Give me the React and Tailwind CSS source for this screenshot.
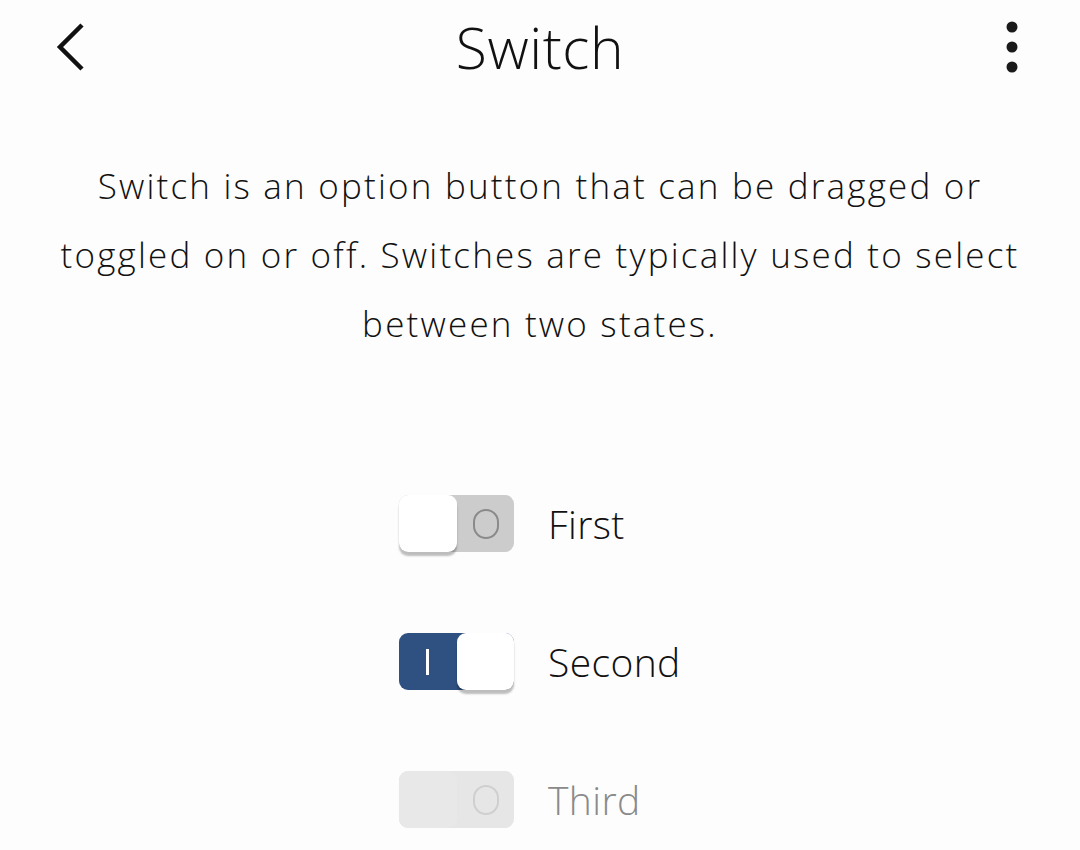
export default function App() {
  return (
    <div className="w-[1080px] h-[850px] bg-[#fdfdfd] overflow-hidden text-[#111] font-['Open_Sans',sans-serif] font-light">
      {/* Header */}
      <div className="h-[100px] grid grid-cols-[1fr_auto_1fr] items-center pl-[46px] pr-[50px]">
        <svg width="40" height="56" viewBox="0 0 40 56" className="-mt-[4px]">
          <path d="M36 5 L14 27 L36 49" fill="none" stroke="#111" strokeWidth="4.5" />
        </svg>
        <div className="text-[57px] leading-none pb-[6px] pl-[4px] tracking-[0.6px]">Switch</div>
        <svg width="12" height="56" viewBox="0 0 12 56" className="justify-self-end mr-[12px] -mt-[6px]">
          <circle cx="6" cy="8" r="5.5" fill="#1a1a1a" />
          <circle cx="6" cy="28" r="5.5" fill="#1a1a1a" />
          <circle cx="6" cy="48" r="5.5" fill="#1a1a1a" />
        </svg>
      </div>

      {/* Description */}
      <p className="mt-[51px] text-center text-[35px] leading-[69px] tracking-[2.2px]">
        Switch is an option button that can be dragged or<br />
        toggled on or off. Switches are typically used to select<br />
        between two states.
      </p>

      {/* Switches */}
      <div className="mt-[137px] ml-[399px] flex flex-col gap-[81px]">
        <Row label="First" checked={false} />
        <Row label="Second" checked />
        <Row label="Third" checked={false} disabled />
      </div>
    </div>
  );
}

function Row({ label, checked, disabled }) {
  return (
    <div className="flex items-center gap-[34px]">
      <Toggle checked={checked} disabled={disabled} />
      <span className={`text-[39px] leading-none tracking-[0.4px] ${disabled ? 'text-[#8a8a8a]' : 'text-[#111]'}`}>{label}</span>
    </div>
  );
}

function Toggle({ checked, disabled }) {
  const track = disabled ? 'bg-[#e6e6e6]' : checked ? 'bg-[#2f5182]' : 'bg-[#cccccc]';
  const thumb = disabled
    ? 'bg-[#e8e8e8]'
    : 'bg-white shadow-[0_4px_2px_rgba(0,0,0,0.25)]';
  return (
    <div className={`relative w-[115px] h-[57px] rounded-[9px] ${track} flex`}>
      {checked ? (
        <>
          <div className="w-[58px] flex items-center justify-center">
            <div className="w-[3px] h-[26px] bg-white" />
          </div>
          <div className={`w-[58px] h-[57px] rounded-[9px] ${thumb}`} />
        </>
      ) : (
        <>
          <div className={`w-[58px] h-[57px] rounded-[9px] ${thumb}`} />
          <div className="w-[57px] flex items-center justify-center">
            <div className={`w-[26px] h-[30px] rounded-full border-2 ${disabled ? 'border-[#cfcfcf]' : 'border-[#8a8a8a]'}`} />
          </div>
        </>
      )}
    </div>
  );
}
